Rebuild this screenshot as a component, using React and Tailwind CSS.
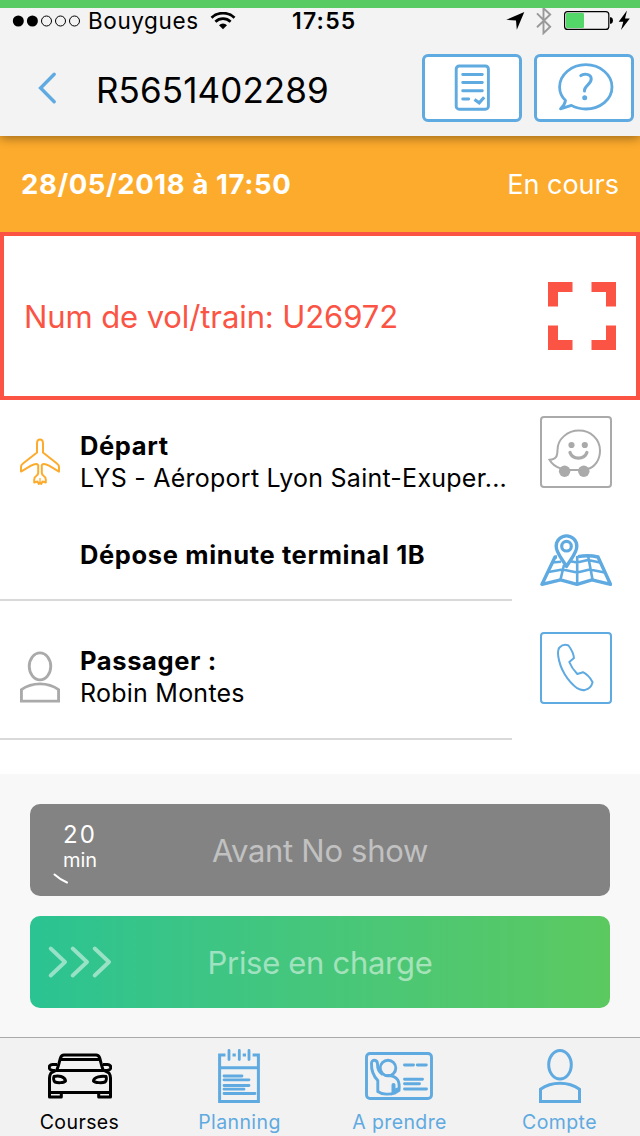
import React, { useState } from 'react';

const SignalDots = () => (
  <svg className="w-[70px] h-3 shrink-0" viewBox="0 0 70 12">
    <circle cx="6.3" cy="6" r="5.5" fill="black" />
    <circle cx="20.4" cy="6" r="5.5" fill="black" />
    <circle cx="34.5" cy="6" r="5" fill="none" stroke="black" />
    <circle cx="48.5" cy="6" r="5" fill="none" stroke="black" />
    <circle cx="62.5" cy="6" r="5" fill="none" stroke="black" />
  </svg>
);

const WifiIcon = () => (
  <svg className="w-[26px] h-[18px] shrink-0" viewBox="0 0 26 18" fill="none" stroke="black" strokeWidth="2.7">
    <path d="M1.5 5.7a16.7 16.7 0 0 1 23 0" />
    <path d="M5.4 9.7a11 11 0 0 1 15.200 0" />
    <path d="M13 17.300l-4-4a5.600 5.600 0 0 1 8 0z" fill="black" stroke="none" />
  </svg>
);

const StatusIcons = () => (
  <svg className="w-[126px] h-7 shrink-0" viewBox="0 0 126 28">
    <path d="M18.3 5L.2 12.800l9.800.6.800 9.400z" fill="black" />
    <path d="M31 6.300l13.200 13.500-6.700 6.400V1.200l6.700 6.300L31 20.300" fill="none" stroke="#999" strokeWidth="1.900" />
    <rect x="58.600" y="4.600" width="44.200" height="17.800" rx="3" fill="none" stroke="black" strokeWidth="1.200" />
    <rect x="60" y="6" width="18" height="15" rx="1.200" fill="#53d769" />
    <path d="M104 10.200h1.200q1.800 1 1.800 3.300t-1.800 3.300H104z" fill="black" />
    <path d="M121 3.500l-8.300 11.200h4.600l-2.300 8.300 8.800-11.600H119z" fill="black" />
  </svg>
);

const BackIcon = () => (
  <svg className="w-5 h-9" viewBox="0 0 20 36" fill="none" stroke="currentColor" strokeWidth="3.400" strokeLinecap="round">
    <path d="M16.200 4.200L2.600 18l13.600 13.800" />
  </svg>
);

const ReportIcon = () => (
  <svg className="w-9 h-12" viewBox="0 0 36 48" fill="none" stroke="currentColor" strokeWidth="2.900" strokeLinecap="round">
    <rect x="2.200" y="2" width="32.200" height="43.200" rx="3" />
    <path d="M8.700 10.500h19.600M8.700 18.500h19.600M8.700 26.800h19.600M8.700 35h6" />
    <path d="M20.500 35.500l4.700 3.300 5-5.600" strokeWidth="3.200" strokeLinecap="butt" />
  </svg>
);

const HelpIcon = () => (
  <svg className="w-14 h-12 overflow-visible" viewBox="0 0 56 48" fill="none" stroke="currentColor" strokeWidth="2.800" strokeLinejoin="round">
    <path d="M9.500 36.500C5.500 32.700 3.600 28 3.600 23 3.600 10.600 15.500.7 29.800.7s26.200 9.900 26.200 22.300-11.600 22-26.200 22c-5.600 0-10.300-1.300-14.400-3.600L4.500 44.800c2.600-2.300 4.500-4.600 5-8.300z" />
    <path d="M24.800 11.600c2.500-2.200 10.400-2.200 10.400 3.400 0 5.500-6.700 6.500-6.700 11.200v.8" strokeLinecap="round" strokeWidth="3" />
    <circle cx="28.700" cy="33.800" r="2.500" fill="currentColor" stroke="none" />
  </svg>
);

const ScanIcon = () => (
  <svg className="w-[68px] h-[68px]" viewBox="0 0 68 68" fill="currentColor">
    <path d="M0 0h24.500v10H10v14.500H0z" />
    <path d="M68 0H43.500v10H58v14.500h10z" />
    <path d="M0 68h24.500V58H10V43.500H0z" />
    <path d="M68 68H43.500V58H58V43.500h10z" />
  </svg>
);

const PlaneIcon = () => (
  <svg className="w-10 h-12" viewBox="0 0 40 48" fill="none" stroke="currentColor" strokeWidth="2" strokeLinejoin="round">
    <path d="M20 2.500c-2 0-3 1.800-3 4v9L3 26.500C1.500 27.700 1 28.800 1 30v4.600l10-6c3-1.500 6-2 7-.8.500.6.200 2 .200 3V36c0 1.500-.6 2-2 3-1.600 1-2 2-2 3.500v3l3.300-1 1.300 2.500 1.200-1.500 1.200 1.500 1.300-2.500 3.300 1v-3c0-1.500-.4-2.500-2-3.500-1.400-1-2-1.500-2-3v-5.200c0-1-.3-2.400.2-3 1-1.200 4-.7 7 .8l10 6V30c0-1.200-.6-2.300-2.100-3.500L23 15.500v-9c0-2.200-1-4-3-4z" />
    <path d="M20 41v4" strokeWidth="1.300" />
  </svg>
);

const WazeIcon = () => (
  <svg className="w-[72px] h-[72px] shrink-0" viewBox="0 0 72 72" fill="none" stroke="currentColor" strokeWidth="2">
    <path d="M47 53.300c8-2.300 13-9.300 13-18.800C60 23 50.500 14.500 39 14.500S17.500 23 17.500 34c0 6-1 9-8 9.800 2.500 4.600 6.300 7 11 8.600M29 54h10" />
    <circle cx="31.500" cy="29" r="3.100" fill="currentColor" stroke="none" />
    <circle cx="44.800" cy="29" r="3.100" fill="currentColor" stroke="none" />
    <path d="M30 36.500c2.500 7.400 14.300 7.400 16.900 0" strokeWidth="3.300" strokeLinecap="round" />
    <circle cx="24.600" cy="55.300" r="5.700" fill="currentColor" stroke="none" />
    <circle cx="43.800" cy="55.300" r="5.700" fill="currentColor" stroke="none" />
  </svg>
);

const MapIcon = () => (
  <svg className="w-[72px] h-[52px]" viewBox="0 0 72 52" fill="none" stroke="currentColor" strokeWidth="2.600" strokeLinejoin="round">
    <path d="M17 23h-2L2 50.300l18.500-4.500L37 50.300l15-4.500 18.500 4.500L58 23c-6-1.500-13-1.800-20-.3" strokeWidth="3.400" />
    <path d="M37.200 22v28M24 31l-3.500 14.500M48 21.500l4.500 24M12 28.500l9-.8M29 27l8 1.500 11-2.500 12 2.500M8.500 38l14-2.500 14.700 3 12.500-3 15 3" />
    <path d="M26.500 32.500C22 24.500 16.200 19 16.200 12.200a10.300 10.300 0 0 1 20.600 0C36.800 19 31 24.500 26.500 32.500z" fill="white" strokeWidth="3.400" />
    <circle cx="26.500" cy="12.200" r="4.800" strokeWidth="3.200" />
  </svg>
);

const PhoneIcon = () => (
  <svg className="w-[72px] h-[72px] shrink-0" viewBox="0 0 72 72" fill="none" stroke="currentColor" strokeWidth="2" strokeLinejoin="round">
    <path d="M19.500 15.500c2.500-2.500 6-3.200 9-2 3 4 5 8 5.500 12.500L29.300 30c1.500 4 4.200 8 8 12l5.700-1.800c4 2 7.200 5.500 9.600 10-1 4-4 6.800-7.500 7.700-2.700.6-5.500-.1-8-1.700C27.500 49 20 37 18.200 24c-.4-3.500-.2-6.700 1.300-8.500z" />
  </svg>
);

const PersonIcon = ({ className }) => (
  <svg className={className} viewBox="0 0 42 54" fill="none" stroke="currentColor" strokeWidth="3">
    <ellipse cx="21" cy="15.800" rx="11.300" ry="14.200" />
    <path d="M1.500 52.400V40.300C12.500 32.200 29.500 32.200 40.500 40.300v12.100z" />
  </svg>
);

const CarIcon = () => (
  <svg className="w-16 h-[54px]" viewBox="0 0 64 54" fill="none" stroke="currentColor" strokeWidth="3" strokeLinejoin="round">
    <path d="M8.500 21.500c1.500-2.500 2.700-8.500 4-12.500.7-2.300 1.600-3 3.500-3h32c2 0 3 .8 3.700 3 1.200 4 2.300 10 3.800 12.500M12.500 10.600h39" />
    <path d="M7.800 21.500h48.400L61 24c1 1.500 1.500 3 1.500 5v19H50.700v-4.500M7.800 21.500L3 24c-1 1.500-1.500 3-1.500 5v19h11.800v-4.500M1.500 43.500h61" />
    <path d="M9 15.500H4.500C2 15.500.8 17 1.500 19.500c.5 1.600 3 2 5.500 2M55 15.500h4.500c2.500 0 3.700 1.500 3 4-.5 1.600-3 2-5.500 2" />
    <path d="M6 27.500c4-1 11-.5 11.500 4.500-1.500 2-8 2-10.500 1-1.600-1-1.600-4-1-5.500zM58 27.500c-4-1-12.500.500-12.500 4.500 1.500 2 9 2 11.500 1 1.600-1 1.600-4 1-5.500z" />
  </svg>
);

const PlanningIcon = () => (
  <svg className="w-[42px] h-[54px] mr-[3px]" viewBox="0 0 42 54" fill="none" stroke="currentColor" strokeWidth="3">
    <path d="M7.500 6H1.600v46.500h38.800V6h-5.800M1.600 18.700h38.800M14.500 6h3.300M24.700 6H28" />
    <path d="M11 1.500v9M21.300 1.500v9M31 1.500v9M6 27h18M6 30.800h25M6 36.500h25M6 40.200h20M6 44.500h31" strokeLinecap="round" strokeWidth="2.800" />
  </svg>
);

const TakeIcon = () => (
  <svg className="w-[68px] h-[54px] mr-0.5" viewBox="0 0 68 54" fill="none" stroke="currentColor" strokeWidth="2.900" strokeLinecap="round">
    <rect x="1.500" y="4.500" width="65" height="45" rx="3.500" />
    <circle cx="23" cy="19" r="7.800" />
    <path d="M17 25c-3-2-4.500-5-4.500-10 0-5-6-5-6-.5-.3 7 1.500 12 6.300 17v11c4.500 3.300 12 3.300 17.500 1.300l3.700-2.300c1-9-1-14.500-11-15" />
    <path d="M28.500 36v7l4.200-2.500" strokeWidth="4" />
    <path d="M39.500 16h9M52.300 16h9M39.500 30.300h18M39.500 34.800h15M39.500 40h22" />
  </svg>
);

const tabs = [
  { id: 'courses', label: 'Courses', icon: <CarIcon /> },
  { id: 'planning', label: 'Planning', icon: <PlanningIcon /> },
  { id: 'prendre', label: 'A prendre', icon: <TakeIcon /> },
  { id: 'compte', label: 'Compte', icon: <PersonIcon className="w-[42px] h-[54px]" /> },
];

const App = () => {
  const [activeTab, setActiveTab] = useState('courses');

  return (
    <div className="w-[640px] h-[1136px] flex flex-col overflow-hidden bg-white text-black font-['Inter','Liberation_Sans',sans-serif]">
      <div className="relative z-20 h-2 shrink-0 bg-[#58cb63]" />

      <header className="relative z-10 h-32 shrink-0 bg-[#f3f3f3] shadow-[0_2px_10px_rgba(0,0,0,0.4)]">
        <div className="h-[26px] flex items-center pl-3">
          <SignalDots />
          <span className="w-[122px] pl-1.5 text-[22.5px] tracking-[0.6px]">Bouygues</span>
          <span className="pl-[6px] flex"><WifiIcon /></span>
          <span className="w-[270px] pl-[56px] text-[23px] font-semibold tracking-[1.2px]">17:55</span>
          <StatusIcons />
        </div>
        <div className="h-[102px] flex items-center pl-[38px] pr-1.5 pt-1.5">
          <button className="text-[#5faae0]"><BackIcon /></button>
          <h1 className="flex-1 pl-[38px] pt-1 text-[35px] leading-10 tracking-[0.1px]">R5651402289</h1>
          <div className="flex gap-3 text-[#5faae0]">
            <button className="w-[100px] h-[68px] flex items-center justify-center rounded-md border-3 border-current bg-white">
              <ReportIcon />
            </button>
            <button className="w-[100px] h-[68px] flex items-center justify-center rounded-md border-3 border-current bg-white">
              <HelpIcon />
            </button>
          </div>
        </div>
      </header>

      <div className="h-24 shrink-0 flex items-center justify-between px-[21px] pt-0.5 bg-[#fdab2c] text-white">
        <span className="text-[27.5px] font-bold tracking-[0.6px]">28/05/2018 à 17:50</span>
        <span className="text-[27px]">En cours</span>
      </div>

      <div className="h-[168px] shrink-0 flex items-center justify-between border-4 border-[#fb5444] pl-5 pr-5 text-[#fb5444]">
        <span className="pt-[3px] text-[31px] tracking-[-0.1px]">Num de vol/train: U26972</span>
        <ScanIcon />
      </div>

      <main className="h-[374px] shrink-0 flex justify-between pr-7">
        <div className="w-[512px] text-[25px] leading-8 tracking-[0.24px]">
          <div className="h-[201px] flex border-b-2 border-[#d9d9d9]">
            <div className="w-20 pl-5 pt-[37px] shrink-0 text-[#fdab2c]"><PlaneIcon /></div>
            <div className="pt-[30px]">
              <p className="text-[25.5px] font-bold tracking-[0.63px]">Départ</p>
              <p className="whitespace-nowrap">LYS - Aéroport Lyon Saint-Exuper...</p>
              <p className="mt-[45px] text-[25.5px] font-bold tracking-[0.63px]">Dépose minute terminal 1B</p>
            </div>
          </div>
          <div className="h-[139px] flex border-b-2 border-[#d9d9d9]">
            <div className="w-20 pl-5 pt-[50px] shrink-0 text-[#aaa]"><PersonIcon className="w-10 h-[52px]" /></div>
            <div className="pt-11">
              <p className="text-[25.5px] font-bold tracking-[0.63px]">Passager :</p>
              <p>Robin Montes</p>
            </div>
          </div>
        </div>
        <div className="flex flex-col pt-4">
          <button className="w-[72px] h-[72px] flex items-center justify-center rounded border-2 border-current text-[#aaa]">
            <WazeIcon />
          </button>
          <button className="mt-[46px] text-[#5faae0]"><MapIcon /></button>
          <button className="mt-[46px] w-[72px] h-[72px] flex items-center justify-center rounded border-2 border-current text-[#5faae0]">
            <PhoneIcon />
          </button>
        </div>
      </main>

      <section className="h-[263px] shrink-0 flex flex-col gap-5 px-[30px] pt-[30px] bg-[#f8f8f8] text-[31px] tracking-[-0.3px]">
        <button className="h-[92px] flex items-center rounded-[10px] bg-[#838383] text-white/50">
          <span className="w-[100px] h-full flex flex-col items-center pt-[18px] text-white">
            <span className="text-2xl leading-[26px] tracking-[2px]">20</span>
            <span className="text-[20px] leading-6 tracking-normal">min</span>
            <svg className="w-4 h-3 -ml-[38px] mt-px" viewBox="0 0 16 12" fill="none" stroke="white" strokeWidth="2" strokeLinecap="round">
              <path d="M1.500 1.500Q7 6.500 14 9.500" />
            </svg>
          </span>
          <span className="w-[380px] pt-[3px] text-center">Avant No show</span>
        </button>
        <button className="h-[92px] flex items-center rounded-[10px] bg-linear-to-r from-[#2ac392] to-[#5bc95f] text-white/50">
          <span className="w-[100px] pl-[18px]">
            <svg className="w-16 h-8" viewBox="0 0 64 32" fill="none" stroke="currentColor" strokeWidth="3.800" strokeLinecap="round" strokeLinejoin="round">
              <path d="M2.700 2.500L17 16 2.700 29.500M24.700 2.500L39 16 24.700 29.500M46.700 2.500L61 16 46.700 29.500" />
            </svg>
          </span>
          <span className="w-[380px] pt-[3px] text-center">Prise en charge</span>
        </button>
      </section>

      <nav className="flex-1 grid grid-cols-4 border-t border-[#aaa] bg-[#f2f2f2]">
        {tabs.map((tab) => (
          <button
            key={tab.id}
            onClick={() => setActiveTab(tab.id)}
            className={`flex flex-col items-center pt-[11px] ${activeTab === tab.id ? 'text-black' : 'text-[#5faae0]'}`}
          >
            {tab.icon}
            <span className="mt-[7px] mr-px text-[19.5px] leading-6 tracking-[0.4px]">{tab.label}</span>
          </button>
        ))}
      </nav>
    </div>
  );
};

export default App;
